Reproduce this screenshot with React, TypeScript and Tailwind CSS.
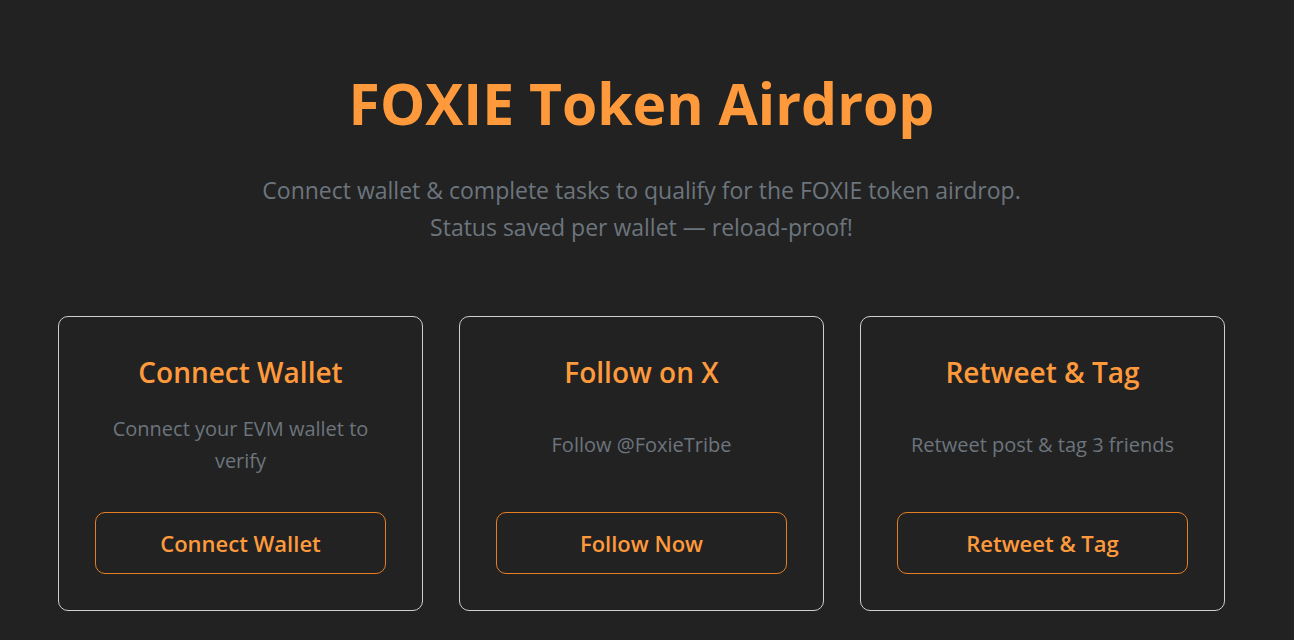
const tasks = [
  {
    title: 'Connect Wallet',
    desc: 'Connect your EVM wallet to verify',
    action: 'Connect Wallet',
  },
  {
    title: 'Follow on X',
    desc: 'Follow @FoxieTribe',
    action: 'Follow Now',
  },
  {
    title: 'Retweet & Tag',
    desc: 'Retweet post & tag 3 friends',
    action: 'Retweet & Tag',
  },
]

function TaskCard({ title, desc, action }: { title: string; desc: string; action: string }) {
  return (
    <div className="flex h-[295px] flex-col rounded-[10px] border border-[#cfcfcf] px-[36px] pt-[37px] pb-[36px] text-center">
      <h3 className="text-[28px] leading-[36px] font-semibold text-[#ff9a3c]">{title}</h3>
      <div className="flex flex-1 items-center justify-center px-[12px] pb-[13px]">
        <p className="text-[20px] leading-[32px] text-[#6c757d]">{desc}</p>
      </div>
      <button className="h-[62px] w-full rounded-[10px] border border-[#e67e22] text-[22px] font-semibold text-[#ff9a3c]">
        {action}
      </button>
    </div>
  )
}

export default function App() {
  return (
    <div
      className="min-h-screen bg-[#222222] pr-[11px]"
      style={{ fontFamily: '"Open Sans", "Noto Sans", sans-serif' }}
    >
      <main className="flex flex-col items-center pt-[68px]">
        <h1 className="text-[57px] leading-[70px] font-bold text-[#ff9a3c]">FOXIE Token Airdrop</h1>
        <p className="mt-[34px] text-center text-[23px] leading-[37px] text-[#6c757d]">
          Connect wallet &amp; complete tasks to qualify for the FOXIE token airdrop.
          <br />
          Status saved per wallet — reload-proof!
        </p>
        <div className="mt-[70px] grid w-[1167px] grid-cols-3 gap-[36px]">
          {tasks.map((t) => (
            <TaskCard key={t.title} {...t} />
          ))}
        </div>
      </main>
    </div>
  )
}
